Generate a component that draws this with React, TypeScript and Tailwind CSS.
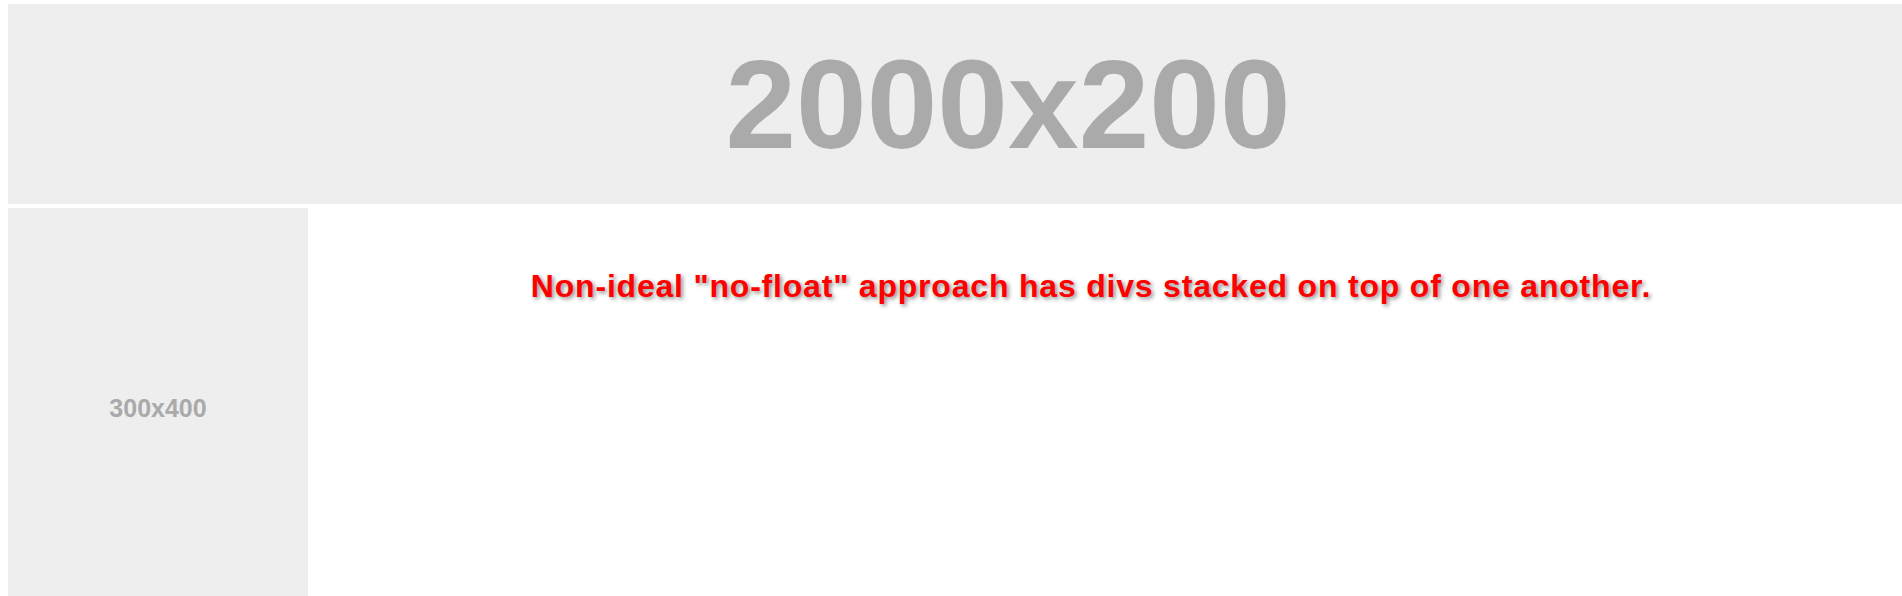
export default function App() {
  return (
    <div className="h-screen overflow-hidden bg-white pl-2 pt-1 font-['Liberation_Sans',Arial,sans-serif]">
      {/* banner is a 2000px placeholder, cut off by the window */}
      <div className="flex h-[200px] w-[2000px] items-center justify-center bg-[#eeeeee]">
        <span className="text-[127px] leading-none font-bold text-[#aaaaaa]">2000x200</span>
      </div>
      <div className="mt-1 flex">
        <div className="flex h-[400px] w-[300px] shrink-0 items-center justify-center bg-[#eeeeee]">
          <span className="text-[25px] leading-none font-bold text-[#aaaaaa]">300x400</span>
        </div>
        <div className="flex flex-1 justify-center pt-[62px] pr-[28px]">
          <p className="text-[32px] leading-none font-bold tracking-[0.8px] text-[#ff0000] [text-shadow:2px_2px_4px_#8a8a8a]">
            Non-ideal "no-float" approach has divs stacked on top of one another.
          </p>
        </div>
      </div>
    </div>
  );
}
